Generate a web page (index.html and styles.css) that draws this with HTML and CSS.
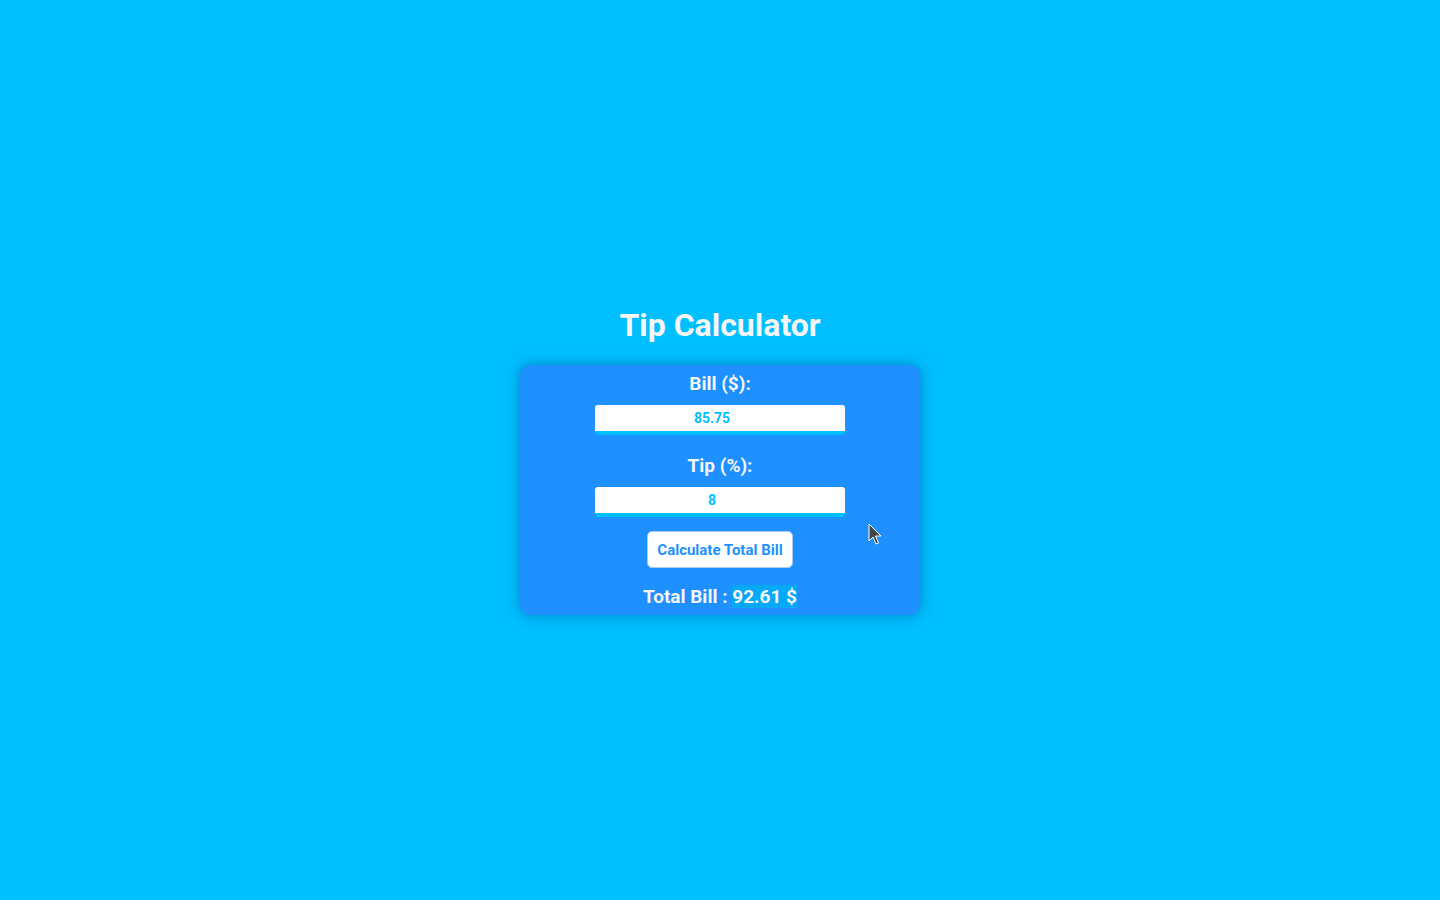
FILE: index.html
```html
<!DOCTYPE html>
<html lang="en">
<head>
<meta charset="utf-8">
<title>Tip Calculator</title>
<link rel="stylesheet" href="styles.css">
</head>
<body>
<main class="page">
  <h1 class="title">Tip Calculator</h1>
  <section class="card">
    <label class="label" for="bill">Bill ($):</label>
    <input class="field" id="bill" type="text" value="85.75">
    <label class="label label-tip" for="tip">Tip (%):</label>
    <input class="field" id="tip" type="text" value="8">
    <button class="btn" type="button">Calculate Total Bill</button>
    <p class="total">Total Bill : <span class="amount">92.61 $</span></p>
  </section>
</main>
<svg class="cursor" width="16" height="24" viewBox="0 0 16 24" aria-hidden="true">
  <path d="M1 1 L1 18 L5 14 L8 21 L10.5 20 L7.5 13 L13 13 Z" fill="#444" stroke="#fff" stroke-width="1"/>
</svg>
</body>
</html>
```
FILE: styles.css
```css
* { box-sizing: border-box; }
html, body { margin: 0; padding: 0; }
body {
  background: #00bfff;
  font-family: Roboto, "Noto Sans", sans-serif;
  min-height: 100vh;
}
.page {
  min-height: 100vh;
  display: flex;
  flex-direction: column;
  align-items: center;
  justify-content: center;
  padding-top: 22px;
}
.title {
  margin: 0 0 21px;
  font-size: 32px;
  font-weight: 700;
  color: #f5f5f5;
  line-height: 37px;
}
.card {
  width: 400px;
  height: 250px;
  background: #1e90ff;
  border-radius: 10px;
  box-shadow: 0 0 14px rgba(0, 60, 120, 0.45);
  display: flex;
  flex-direction: column;
  align-items: center;
  padding: 7px 0 6px;
}
.card > * { flex-shrink: 0; }
.label {
  font-size: 19px;
  font-weight: 700;
  color: #f5f5f5;
  line-height: 24px;
}
.label-tip { margin-top: 19px; }
.field {
  margin-top: 9px;
  width: 250px;
  height: 30px;
  border: none;
  border-bottom: 4px solid #00bfff;
  border-radius: 3px;
  background: #fff;
  text-align: center;
  font-family: Roboto, sans-serif;
  font-size: 14px;
  font-weight: 700;
  color: #00bfff;
  padding: 0 16px 0 0;
  outline: none;
}
.btn {
  margin-top: 14px;
  height: 37px;
  width: 146px;
  padding: 0;
  background: #fff;
  border: 1px solid #a9c9f2;
  border-radius: 5px;
  font-family: Roboto, sans-serif;
  font-size: 15px;
  font-weight: 700;
  color: #1e90ff;
}
.total {
  margin: 17px 0 0;
  font-size: 19px;
  font-weight: 700;
  color: #f5f5f5;
  line-height: 24px;
}
.amount {
  background: #06a9f6;
}
.cursor {
  position: absolute;
  left: 868px;
  top: 523px;
}
```
